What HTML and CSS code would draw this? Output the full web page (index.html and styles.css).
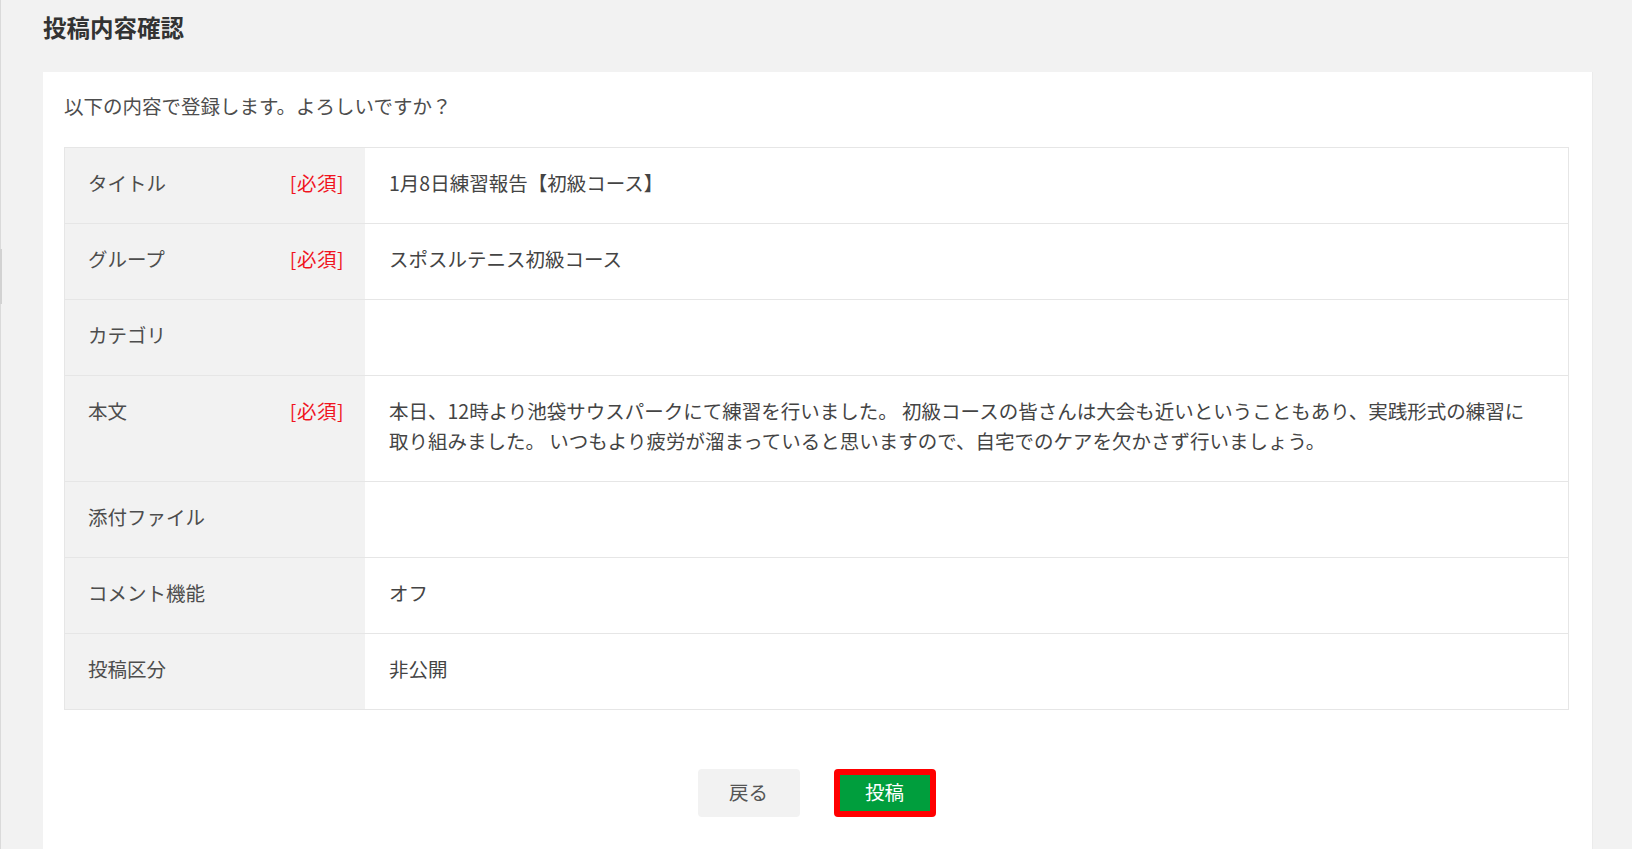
FILE: index.html
```html
<!DOCTYPE html>
<html lang="ja">
<head>
<meta charset="utf-8">
<title>投稿内容確認</title>
<link rel="stylesheet" href="styles.css">
</head>
<body>
<div class="scroll-mark"></div>
<div class="page">
  <h1 class="page-title">投稿内容確認</h1>
  <div class="panel">
    <p class="intro">以下の内容で登録します。よろしいですか？</p>
    <div class="rows">
      <div class="row">
        <div class="label"><span>タイトル</span><span class="req">[必須]</span></div>
        <div class="value">1月8日練習報告【初級コース】</div>
      </div>
      <div class="row">
        <div class="label"><span>グループ</span><span class="req">[必須]</span></div>
        <div class="value">スポスルテニス初級コース</div>
      </div>
      <div class="row">
        <div class="label"><span>カテゴリ</span></div>
        <div class="value"></div>
      </div>
      <div class="row">
        <div class="label"><span>本文</span><span class="req">[必須]</span></div>
        <div class="value">本日、12時より池袋サウスパークにて練習を行いました。 初級コースの皆さんは大会も近いということもあり、実践形式の練習に<br>取り組みました。 いつもより疲労が溜まっていると思いますので、自宅でのケアを欠かさず行いましょう。</div>
      </div>
      <div class="row">
        <div class="label"><span>添付ファイル</span></div>
        <div class="value"></div>
      </div>
      <div class="row">
        <div class="label"><span>コメント機能</span></div>
        <div class="value">オフ</div>
      </div>
      <div class="row">
        <div class="label"><span>投稿区分</span></div>
        <div class="value">非公開</div>
      </div>
    </div>
    <div class="actions">
      <button class="btn btn-back" type="button">戻る</button>
      <button class="btn btn-post" type="button">投稿</button>
    </div>
  </div>
</div>
</body>
</html>
```
FILE: styles.css
```css
html, body {
  margin: 0;
  padding: 0;
}
body {
  background: #f2f2f2;
  border-left: 1px solid #dadada;
  min-height: 849px;
  box-sizing: border-box;
  font-family: "Noto Sans CJK JP", "Noto Sans", sans-serif;
  color: #4a4a4a;
  font-size: 19.5px;
  overflow: hidden;
}
.scroll-mark {
  position: absolute;
  left: 0;
  top: 249px;
  width: 2px;
  height: 55px;
  background: #d2d2d2;
}
.page {
  padding: 0 39px 0 42px;
}
.page-title {
  margin: 0;
  padding: 9px 0 27px 0;
  font-size: 23.5px;
  line-height: 36px;
  font-weight: bold;
  color: #333;
}
.panel {
  background: #fff;
  padding: 19px 23px 60px 21px;
  border-right: 1px solid #ebebeb;
  min-height: 760px;
  box-sizing: border-box;
}
.intro {
  margin: 0 0 26px 0;
  line-height: 30px;
  color: #4d4d4d;
}
.rows {
  border-top: 1px solid #e6e6e6;
}
.row {
  display: grid;
  grid-template-columns: 300px 1fr;
  border-left: 1px solid #e6e6e6;
  border-right: 1px solid #e6e6e6;
  border-bottom: 1px solid #e6e6e6;
  line-height: 30px;
}
.label {
  background: #f2f2f2;
  padding: 20px 21px 25px 23px;
  display: flex;
  justify-content: space-between;
  align-items: flex-start;
  color: #4d4d4d;
}
.req {
  color: #f0141e;
  letter-spacing: 0.5px;
}
.value {
  padding: 20px 20px 25px 24px;
  white-space: nowrap;
  color: #444;
}
.actions {
  display: flex;
  justify-content: center;
  align-items: center;
  gap: 34px;
  margin-top: 59px;
}
.btn {
  width: 102px;
  height: 48px;
  box-sizing: border-box;
  border-radius: 4px;
  font-family: "Noto Sans CJK JP", "Noto Sans", sans-serif;
  font-size: 19.5px;
  cursor: pointer;
  padding: 0 0 3px 0;
}
.btn-back {
  background: #f2f2f2;
  border: none;
  color: #555;
}
.btn-post {
  background: #009e3d;
  border: 6px solid #ff0000;
  color: #fff;
}
```
